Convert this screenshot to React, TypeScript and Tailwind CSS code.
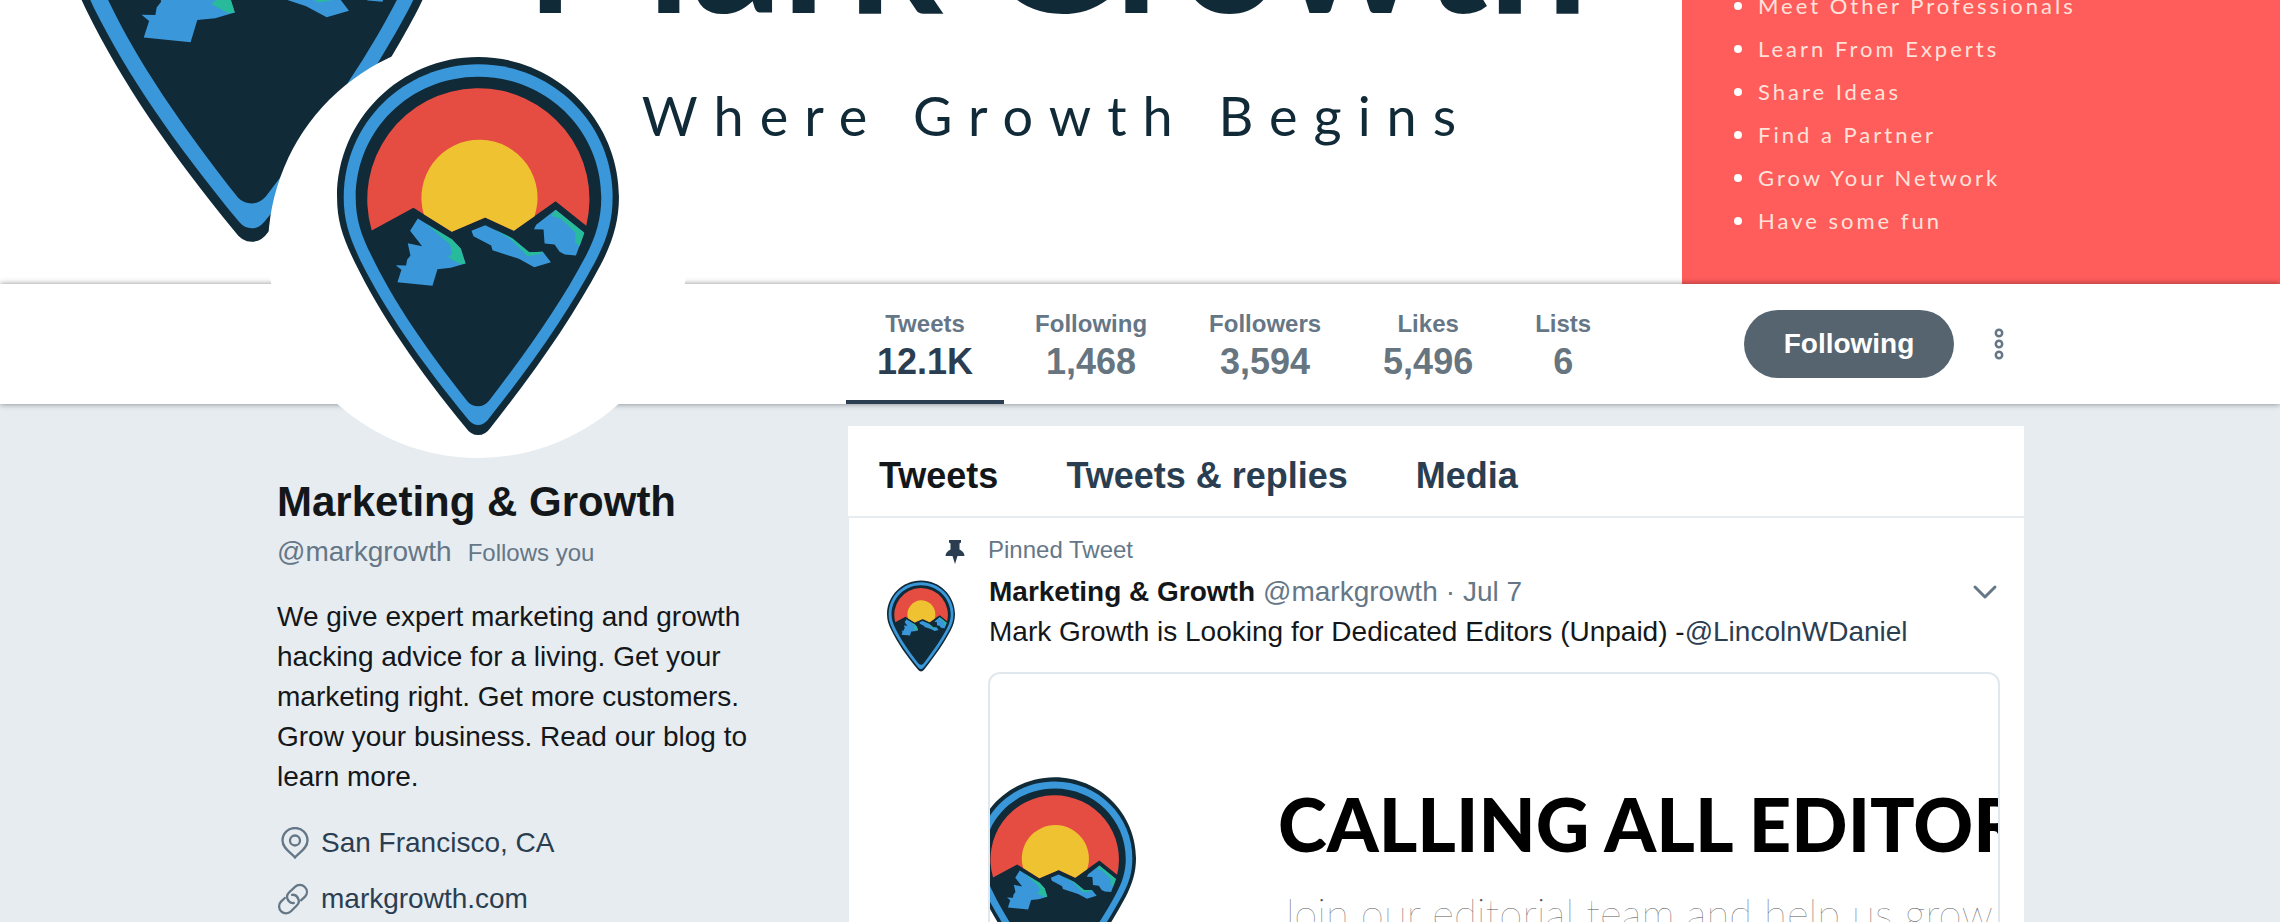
import { useState } from "react";

interface LogoProps {
    className: string;
}

interface Stat {
    label: string;
    value: string;
}

const stats: Stat[] = [
    { label: "Tweets", value: "12.1K" },
    { label: "Following", value: "1,468" },
    { label: "Followers", value: "3,594" },
    { label: "Likes", value: "5,496" },
    { label: "Lists", value: "6" },
];

const perks = [
    "Meet Other Professionals",
    "Learn From Experts",
    "Share Ideas",
    "Find a Partner",
    "Grow Your Network",
    "Have some fun",
];

const tabs = ["Tweets", "Tweets & replies", "Media"];

const Logo = ({ className }: LogoProps) => (
    <svg viewBox="37 35 845 1133" className={className} aria-hidden="true">
        <path
            fill="#112a38"
            d="M460 35C693 35 882 223 882 455C882 530 862 592 826 660C745 812 640 965 497 1146Q482 1168 460 1168Q438 1168 423 1146C275 965 170 812 90 650C56 580 37 530 37 455C37 223 227 35 460 35Z"
        />
        <path
            fill="#3a98da"
            d="M460 57C683 57 863 234 863 455C863 528 846 582 810 650C735 790 630 945 488 1124Q476 1138 460 1138Q444 1138 432 1124C285 945 182 795 107 645C74 575 57 528 57 455C57 234 237 57 460 57Z"
        />
        <path
            fill="#112a38"
            d="M460 94C664 94 829 254 829 457C829 522 812 578 778 640C712 765 620 900 492 1066Q478 1082 460 1082Q442 1082 430 1070C300 905 205 765 140 630C110 570 93 522 93 457C93 254 256 94 460 94Z"
        />
        <path
            fill="#e64d42"
            d="M141 555A333 333 0 1 1 784 541L692 467L567 556L481 516L381 559L266 487Z"
        />
        <path fill="#efc231" d="M297 506A174 174 0 1 1 629 512L567 556L481 516L381 559Z" />
        <path
            fill="#3a98da"
            d="M279 519L382 582L408 610L422 654L378 667L338 671L323 721L218 710L230 673L213 659L244 660L247 643L257 630L249 593L292 602L256 556Z"
        />
        <path fill="#28bb9b" d="M304 535L382 582L408 610L422 654L408 656L370 635L383 624L375 596Z" />
        <path
            fill="#3a98da"
            d="M481 539L562 578L613 620L654 619L678 650L628 665L582 640L503 614L499 600L446 572L440 556Z"
        />
        <path fill="#28bb9b" d="M508 551L562 578L613 620L654 619L650 625L608 632L556 580Z" />
        <path
            fill="#3a98da"
            d="M692 493L778 562L753 630L720 627L704 619L689 597L659 594L656 552L627 551L634 538Z"
        />
        <path fill="#28bb9b" d="M692 493L778 562L764 602L750 590L752 562L708 520L679 511Z" />
    </svg>
);

const PlaceIcon = () => (
    <svg viewBox="0 0 28 32" className="h-8 w-7" fill="none" stroke="#657786" strokeWidth="2.300">
        <path d="M14 30.500C10.500 26 1.500 21.500 1.500 13.500A12.500 12.500 0 0 1 26.500 13.500C26.500 21.500 17.500 26 14 30.500Z" />
        <circle cx="14" cy="13.500" r="5" />
    </svg>
);

const LinkIcon = () => (
    <svg viewBox="0 0 32 32" className="h-8 w-8" fill="none" stroke="#657786" strokeWidth="2.300" strokeLinecap="round">
        <path d="M11 17C9.500 14.500 10 11.500 12 9.500L18 3.800C20.800 1.300 25 1.300 27.800 4C30.600 6.800 30.600 10.800 28 13.600L24 17.300" />
        <path d="M11 17C12.200 19.200 14.500 20.300 16.800 20" />
        <path d="M20.500 14.500C22.300 17 22 20.300 19.800 22.500L14 28.300C11.200 31 7 31 4.200 28.300C1.400 25.500 1.400 21.300 4 18.600L7.800 15" />
        <path d="M20.500 14.500C19.300 12.500 17.200 11.500 15 11.800" />
    </svg>
);

const PinnedIcon = () => (
    <svg viewBox="0 0 20 24" className="h-6 w-5" fill="#2b3e51">
        <path d="M4 0H16V2.500L14.500 3.500V9.500C17.500 11 19.500 13 19.500 16H12.500L10 24L7.500 16H0.500C0.500 13 2.500 11 5.500 9.500V3.500L4 2.500Z" />
    </svg>
);

const Banner = () => (
    <div className="flex h-[284px] items-end overflow-hidden bg-white">
        <Logo className="mb-[42px] ml-[63px] h-[506px] w-[377px] shrink-0" />
        <div className="flex flex-1 flex-col items-center gap-12 pr-2 pb-[136px] whitespace-nowrap font-['Lato',sans-serif] text-[#112a38]">
            <div className="text-[178px] leading-[184px] font-bold">Mark Growth</div>
            <div className="text-[54px] leading-[64px] tracking-[16px]">Where Growth Begins</div>
        </div>
        <ul className="flex h-[506px] w-[598px] shrink-0 flex-col justify-end bg-[#ff5c5c] pb-[42px] pl-[52px] font-['Lato',sans-serif] text-[22px] leading-[43px] tracking-[3px] text-[#ffe3da]">
            {perks.map((perk) => (
                <li key={perk} className="flex items-center gap-4">
                    <span className="size-2 rounded-full bg-white" />
                    {perk}
                </li>
            ))}
        </ul>
    </div>
);

const ProfileNav = () => {
    const [following, setFollowing] = useState(true);

    return (
        <nav className="relative bg-white shadow-[0_0_6px_rgba(0,0,0,0.45)]">
            <div className="relative mx-auto flex h-[120px] max-w-[1768px] items-center pr-[10px] pl-[590px]">
                <a
                    href="#avatar"
                    aria-label="Marketing & Growth"
                    className="absolute -top-[246px] left-3 flex size-[420px] justify-center rounded-full bg-white pt-[19px]"
                >
                    <Logo className="h-[378px] w-[282px]" />
                </a>
                <ul className="flex self-stretch">
                    {stats.map((stat, index) => (
                        <li key={stat.label}>
                            <a
                                href={`#${stat.label}`}
                                className={`flex h-full flex-col items-center border-b-4 px-[31px] pt-[26px] font-bold ${index === 0 ? "border-[#2b3e51]" : "border-transparent"}`}
                            >
                                <span className="text-[24px] leading-[28px] text-[#657786]">{stat.label}</span>
                                <span className={`text-[36px] leading-[48px] ${index === 0 ? "text-[#2b3e51]" : "text-[#667580]"}`}>
                                    {stat.value}
                                </span>
                            </a>
                        </li>
                    ))}
                </ul>
                <button
                    onClick={() => setFollowing(!following)}
                    className="ml-auto h-[68px] w-[210px] rounded-full bg-[#566470] text-[28px] font-bold text-white"
                >
                    {following ? "Following" : "Follow"}
                </button>
                <button aria-label="More user actions" className="ml-[30px] flex w-[30px] justify-center">
                    <svg viewBox="0 0 10 32" className="h-8 w-[10px]" fill="none" stroke="#657786" strokeWidth="2.500">
                        <circle cx="5" cy="5" r="3.200" />
                        <circle cx="5" cy="16" r="3.200" />
                        <circle cx="5" cy="27" r="3.200" />
                    </svg>
                </button>
            </div>
        </nav>
    );
};

const Sidebar = () => (
    <aside className="w-[592px] shrink-0 pt-[74px] pl-[21px]">
        <h1 className="text-[42px] leading-[48px] font-bold text-[#14171a]">Marketing & Growth</h1>
        <div className="mt-1 flex items-baseline gap-4 leading-[44px] text-[#657786]">
            <a href="#markgrowth" className="text-[28px]">@markgrowth</a>
            <span className="text-[24px]">Follows you</span>
        </div>
        <p className="mt-[22px] w-[500px] text-[28px] leading-[40px] text-[#14171a]">
            We give expert marketing and growth hacking advice for a living. Get your marketing right. Get more
            customers. Grow your business. Read our blog to learn more.
        </p>
        <div className="mt-[18px] text-[28px] leading-[56px] text-[#2b3e51]">
            <div className="flex items-center gap-3">
                <span className="flex w-8 justify-center pl-1"><PlaceIcon /></span>
                San Francisco, CA
            </div>
            <div className="flex items-center gap-3">
                <span className="flex w-8 justify-center"><LinkIcon /></span>
                <a href="#site">markgrowth.com</a>
            </div>
        </div>
    </aside>
);

const Timeline = () => (
    <main className="mt-[22px] min-w-0 flex-1 bg-white">
        <div className="flex h-[92px] items-center gap-[68px] border-b-2 border-[#e6ecf0] px-[31px] pt-[10px] text-[36px] font-bold">
            {tabs.map((tab, index) => (
                <a key={tab} href={`#tab-${index}`} className={index === 0 ? "text-[#14171a]" : "text-[#2b3e51]"}>
                    {tab}
                </a>
            ))}
        </div>
        <article className="flex gap-8 border-l border-[#e6ecf0] pt-4 pr-6 pb-8 pl-[38px] text-[28px] leading-[40px]">
            <div className="flex w-[69px] shrink-0 flex-col">
                <div className="flex h-8 items-center justify-end pt-1 -mr-[9px]">
                    <PinnedIcon />
                </div>
                <Logo className="mt-[14px] h-[92px] w-[68px]" />
            </div>
            <div className="min-w-0 flex-1">
                <div className="text-[24px] leading-[32px] text-[#657786]">Pinned Tweet</div>
                <div className="mt-[6px] flex items-center pl-px text-[#657786]">
                    <a href="#author" className="mr-2 font-bold text-[#14171a]">Marketing & Growth</a>
                    <a href="#markgrowth">@markgrowth</a>
                    <span className="mx-2">·</span>
                    <a href="#tweet">Jul 7</a>
                    <button aria-label="More" className="ml-auto pr-[2px]">
                        <svg viewBox="0 0 26 16" className="h-4 w-[26px]" fill="none" stroke="#657786" strokeWidth="3" strokeLinecap="round" strokeLinejoin="round">
                            <path d="M3 3L13 13L23 3" />
                        </svg>
                    </button>
                </div>
                <p className="pl-px text-[#14171a]">
                    Mark Growth is Looking for Dedicated Editors (Unpaid) -
                    <a href="#lincoln" className="text-[#2b3e51]">@LincolnWDaniel</a>
                </p>
                <a
                    href="#card"
                    className="mt-5 flex h-[500px] overflow-hidden rounded-xl border-2 border-[#e1e8ed] pt-[103px] whitespace-nowrap font-['Lato',sans-serif]"
                >
                    <Logo className="-ml-[17px] h-[219px] w-[163px] shrink-0" />
                    <div className="pt-1 pl-[142px]">
                        <div className="text-[74px] leading-[86px] font-black text-black">CALLING ALL EDITORS</div>
                        <div className="mt-5 text-[42px] leading-[52px] font-thin text-[#555555]">
                            Join our editorial team and help us grow
                        </div>
                    </div>
                </a>
            </div>
        </article>
    </main>
);

export default function App() {
    return (
        <div className="h-screen overflow-hidden bg-[#e6ecf0] font-['Liberation_Sans',Arial,sans-serif]">
            <Banner />
            <ProfileNav />
            <div className="mx-auto flex max-w-[1768px]">
                <Sidebar />
                <Timeline />
            </div>
        </div>
    );
}
